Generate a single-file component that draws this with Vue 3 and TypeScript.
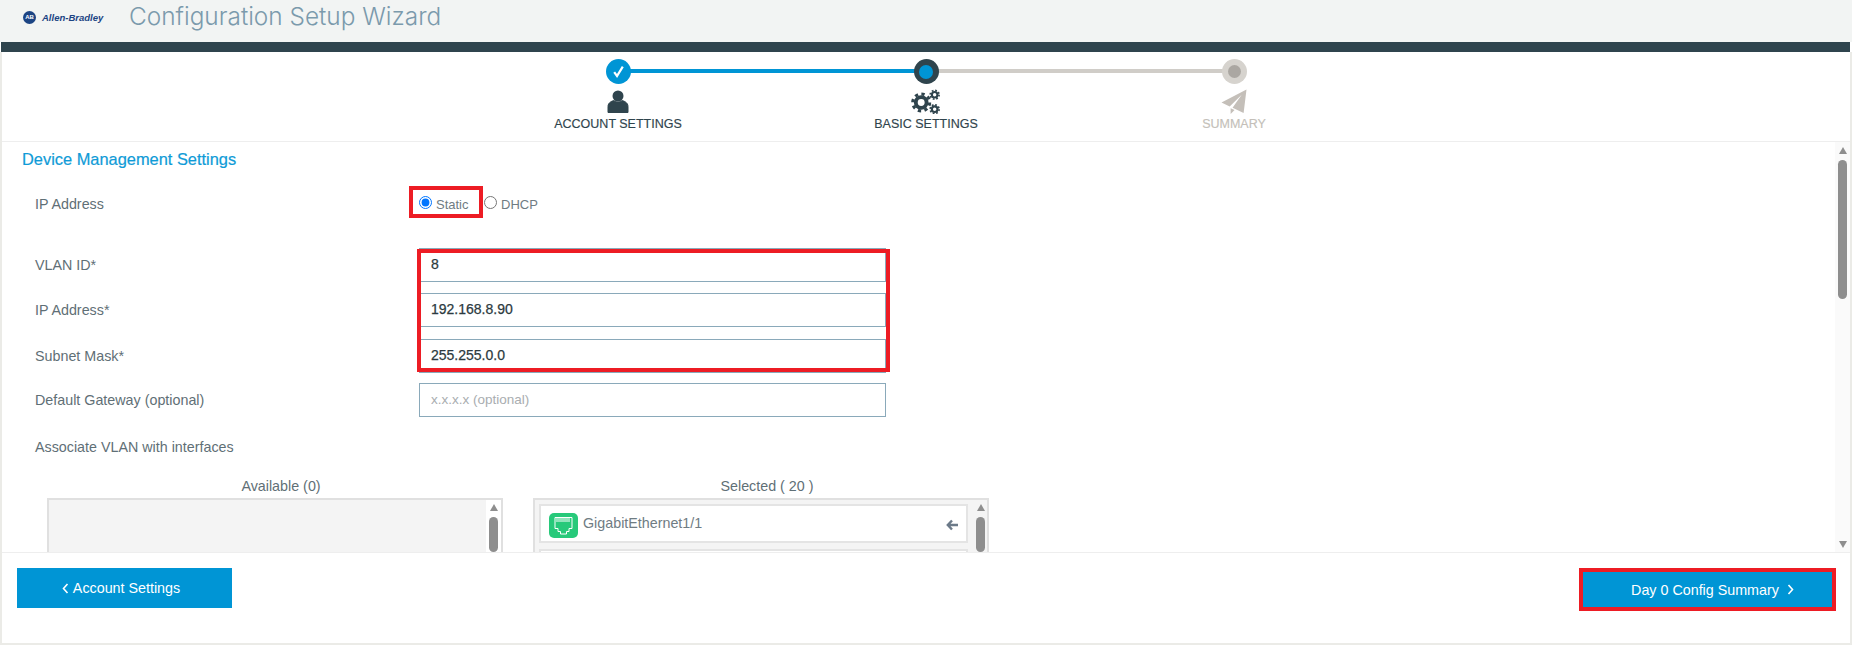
<script setup lang="ts">
interface Field { label: string; value: string; placeholder?: string }
const fields: Field[] = [
  { label: 'VLAN ID*', value: '8' },
  { label: 'IP Address*', value: '192.168.8.90' },
  { label: 'Subnet Mask*', value: '255.255.0.0' },
]
</script>

<template>
  <div class="frame">
    <header class="brand">
      <div class="logo">
        <span class="logo-badge">AB</span>
        <span class="logo-name">Allen-Bradley</span>
      </div>
      <h1 class="wizard-title">Configuration Setup Wizard</h1>
    </header>
    <div class="band"></div>

    <div class="body">
      <nav class="stepper">
        <div class="step step-done">
          <span class="dot">
            <svg width="13" height="13" viewBox="0 0 13 13"><path d="M2.2 7.2 L5 11 L10.8 1.6" fill="none" stroke="#fff" stroke-width="2.2" /></svg>
          </span>
          <svg class="step-icon" width="22" height="24" viewBox="0 0 22 24">
            <circle cx="11" cy="6.5" r="5.5" fill="#2f444d" />
            <path d="M1 23 V17 C1 13 5 11.5 7 11 C9 13 13 13 15 11 C17 11.5 21 13 21 17 V23 Z" fill="#2f444d" stroke="#2f444d" stroke-linejoin="round" />
          </svg>
          <span class="step-label">ACCOUNT SETTINGS</span>
        </div>
        <div class="step step-current">
          <span class="dot"><i></i></span>
          <svg class="step-icon" width="30" height="26" viewBox="0 0 30 26">
            <g fill="none" stroke="#2f444d">
              <circle cx="10" cy="14" r="5.6" stroke-width="4" />
              <circle cx="10" cy="14" r="8.8" stroke-width="3.2" stroke-dasharray="3.4 3.5" />
              <circle cx="24" cy="6" r="2.9" stroke-width="2.2" />
              <circle cx="24" cy="6" r="4.6" stroke-width="1.8" stroke-dasharray="1.8 1.81" />
              <circle cx="24" cy="21" r="2.9" stroke-width="2.2" />
              <circle cx="24" cy="21" r="4.6" stroke-width="1.8" stroke-dasharray="1.8 1.81" />
            </g>
          </svg>
          <span class="step-label">BASIC SETTINGS</span>
        </div>
        <div class="step step-next">
          <span class="dot"><i></i></span>
          <svg class="step-icon" width="28" height="26" viewBox="0 0 28 26">
            <path d="M27 0.5 L1 14 L9.5 18.2 L22 6 L12.5 19.6 L24 25 Z M10.5 20 L10.5 26 L14.6 21.8 Z" fill="#c4bfb9" />
          </svg>
          <span class="step-label">SUMMARY</span>
        </div>
      </nav>

      <main class="content">
        <h2 class="section-title">Device Management Settings</h2>

        <div class="row row-mode">
          <span class="field-label">IP Address</span>
          <div class="mode">
            <label class="choice choice-marked"><input type="radio" name="mode" checked />Static</label>
            <label class="choice"><input type="radio" name="mode" />DHCP</label>
          </div>
        </div>

        <div class="marked-group">
          <div v-for="f in fields" :key="f.label" class="row">
            <span class="field-label">{{ f.label }}</span>
            <input class="text-input" type="text" :value="f.value" readonly />
          </div>
        </div>

        <div class="row">
          <span class="field-label">Default Gateway (optional)</span>
          <input class="text-input" type="text" placeholder="x.x.x.x (optional)" readonly />
        </div>

        <div class="row row-assoc">
          <span class="field-label">Associate VLAN with interfaces</span>
        </div>

        <div class="lists">
          <section class="list-col">
            <div class="list-title">Available (0)</div>
            <div class="list-box list-empty">
              <div class="mini-scroll">
                <span class="arrow-up"></span>
                <span class="mini-thumb"></span>
              </div>
            </div>
          </section>
          <section class="list-col">
            <div class="list-title">Selected ( 20 )</div>
            <div class="list-box">
              <div class="list-items">
                <div class="item">
                  <span class="port">
                    <svg width="29" height="25" viewBox="0 0 29 25">
                      <path d="M6 4.5 H23 V15.5 H20 V18.5 H17.5 V21 H11.5 V18.5 H9 V15.5 H6 Z" fill="none" stroke="#fff" stroke-width="1" />
                      <path d="M8 5 V9 M10 5 V9 M12 5 V9 M14 5 V9 M16 5 V9 M18 5 V9 M20 5 V9" stroke="#fff" stroke-width="1" />
                    </svg>
                  </span>
                  <span class="item-name">GigabitEthernet1/1</span>
                  <svg class="item-arrow" width="12" height="12" viewBox="0 0 12 12">
                    <path d="M6 1.5 L1.8 6 L6 10.5 M2 6 H12" fill="none" stroke="#6c7a89" stroke-width="2.4" />
                  </svg>
                </div>
                <div class="item"></div>
              </div>
              <div class="mini-scroll mini-scroll-flat">
                <span class="arrow-up"></span>
                <span class="mini-thumb"></span>
              </div>
            </div>
          </section>
        </div>

        <div class="main-scroll">
          <span class="arrow-up"></span>
          <span class="main-thumb"></span>
          <span class="arrow-down"></span>
        </div>
      </main>

      <footer class="actions">
        <button class="btn btn-back" type="button">
          <svg width="7" height="11" viewBox="0 0 7 11"><path d="M5.5 1 L1.5 5.5 L5.5 10" fill="none" stroke="#fff" stroke-width="1.6" /></svg>
          Account Settings
        </button>
        <button class="btn btn-next" type="button">
          Day 0 Config Summary
          <svg width="7" height="11" viewBox="0 0 7 11"><path d="M1.5 1 L5.5 5.5 L1.5 10" fill="none" stroke="#fff" stroke-width="1.6" /></svg>
        </button>
      </footer>
    </div>
  </div>
</template>

<style scoped>
.frame {
  width: 1852px;
  height: 645px;
  display: flex;
  flex-direction: column;
  font-family: "Liberation Sans", Arial, sans-serif;
  color: #5f6f76;
  background: #fff;
  overflow: hidden;
}
.brand {
  height: 42px;
  flex: none;
  background: #f2f4f3;
  display: flex;
  align-items: flex-start;
}
.logo {
  display: flex;
  align-items: center;
  gap: 6px;
  margin: 11px 0 0 23px;
  width: 106px;
}
.logo-badge {
  width: 13px;
  height: 13px;
  border-radius: 50%;
  background: #1c4483;
  color: #fff;
  font-size: 6px;
  font-weight: 700;
  line-height: 13px;
  text-align: center;
  flex: none;
}
.logo-name {
  font-size: 9.5px;
  font-weight: 700;
  font-style: italic;
  color: #1c4483;
  white-space: nowrap;
}
.wizard-title {
  margin: 0;
  font-family: Inter, "Liberation Sans", sans-serif;
  font-size: 24.4px;
  line-height: 32px;
  font-weight: 300;
  color: #7b9aac;
  white-space: nowrap;
}
.band {
  height: 10px;
  flex: none;
  margin: 0 2px 0 1px;
  background: #2f444d;
}
.body {
  flex: 1;
  min-height: 0;
  display: flex;
  flex-direction: column;
  border-left: 2px solid #ebebe7;
  border-right: 2px solid #ebebe7;
  border-bottom: 2px solid #ebebe7;
}
.stepper {
  height: 90px;
  flex: none;
  box-sizing: border-box;
  padding: 7px 0 0 0;
  display: flex;
  justify-content: center;
  border-bottom: 1px solid #eeeeee;
}
.step {
  position: relative;
  width: 308px;
  display: flex;
  flex-direction: column;
  align-items: center;
}
.step-done::after,
.step-current::after {
  content: "";
  position: absolute;
  left: 50%;
  top: 10px;
  width: 308px;
  height: 4px;
  background: #d0cdc8;
}
.step-done::after { background: #0095d5; }
.dot {
  position: relative;
  z-index: 1;
  width: 25px;
  height: 25px;
  border-radius: 50%;
  display: flex;
  align-items: center;
  justify-content: center;
}
.step-done .dot { background: #0095d5; }
.step-current .dot { background: #2f444d; }
.step-current .dot i { width: 14px; height: 14px; border-radius: 50%; background: #0095d5; }
.step-next .dot { background: #d6d3ce; }
.step-next .dot i { width: 13px; height: 13px; border-radius: 50%; background: #aba7a2; }
.step-icon { margin-top: 5px; display: block; height: 25px; }
.step-label {
  margin-top: 2px;
  font-size: 12.5px;
  line-height: 16px;
  color: #2f444d;
  -webkit-text-stroke: 0.15px currentColor;
  white-space: nowrap;
}
.step-next .step-label { color: #c4bfb9; }

.content {
  position: relative;
  flex: 1;
  min-height: 0;
  overflow: hidden;
  padding-left: 20px;
}
.section-title {
  margin: 0;
  height: 34px;
  font-size: 16.4px;
  line-height: 35px;
  font-weight: 400;
  color: #0f9bd7;
  -webkit-text-stroke: 0.2px #0f9bd7;
}
.row {
  display: flex;
  align-items: center;
  height: 34px;
  margin-bottom: 11.33px;
  padding-left: 13px;
}
.row-mode { height: 36px; margin: 10px 0 26px; }
.row-assoc { margin: 12.67px 0 10px; }
.field-label {
  width: 384px;
  flex: none;
  font-size: 14.3px;
  color: #5f6f76;
}
.mode { display: flex; align-items: center; }
.choice {
  display: flex;
  align-items: center;
  font-size: 13px;
  color: #6f7c83;
  width: 65px;
  gap: 4px;
  position: relative;
}
.choice + .choice { width: auto; }
.choice input { margin: -3px 0 0 0; width: 13px; height: 13px; }
.choice-marked::after {
  content: "";
  position: absolute;
  left: -10px;
  top: -11px;
  width: 74px;
  height: 32px;
  box-sizing: border-box;
  border: 4px solid #ed1c24;
  pointer-events: none;
}
.marked-group { position: relative; height: 124px; margin-bottom: 11.33px; }
.marked-group .row:last-child { margin-bottom: 0; }
.marked-group::after {
  content: "";
  position: absolute;
  left: 395px;
  top: 1px;
  width: 473px;
  height: 123px;
  box-sizing: border-box;
  border: 4px solid #ed1c24;
  pointer-events: none;
}
.text-input {
  width: 467px;
  height: 34px;
  box-sizing: border-box;
  border: 1px solid #8aa9ba;
  outline: none;
  padding: 0 11px 2px;
  font-family: "Liberation Sans", sans-serif;
  font-size: 14px;
  color: #2c3a40;
  -webkit-text-stroke: 0.25px #2c3a40;
  background: #fff;
}
.text-input::placeholder {
  font-size: 13.5px;
  color: #a9adb0;
  -webkit-text-stroke: 0;
  opacity: 1;
}
.lists { display: flex; gap: 30px; padding-left: 25px; }
.list-col { width: 456px; }
.list-title {
  height: 24px;
  line-height: 24px;
  text-align: center;
  padding-left: 12px;
  font-size: 14.3px;
  color: #5f6f76;
}
.list-box {
  display: flex;
  height: 120px;
  box-sizing: border-box;
  border: 2px solid #e0e0e0;
  background: #f4f4f4;
  position: relative;
}
.list-items { flex: 1; padding: 4px 6px 0 4px; min-width: 0; }
.list-empty { justify-content: flex-end; }
.item {
  height: 39px;
  box-sizing: border-box;
  border: 2px solid #e4e4e4;
  background: #fff;
  margin-bottom: 6px;
  display: flex;
  align-items: center;
  padding-left: 8px;
}
.port {
  width: 29px;
  height: 25px;
  margin-top: 4px;
  border-radius: 5px;
  background: #27c97a;
  flex: none;
  display: block;
}
.port svg { display: block; }
.item-name { margin: -1px 0 0 5px; font-size: 14.3px; color: #6f7c83; flex: 1; }
.item-arrow { margin: 3px 8px 0 0; flex: none; }
.mini-scroll {
  width: 15px;
  flex: none;
  background: #fff;
  display: flex;
  flex-direction: column;
  align-items: center;
  padding-top: 4px;
  box-sizing: border-box;
}
.mini-scroll-flat { background: transparent; width: 13px; }
.arrow-up, .arrow-down {
  width: 0;
  height: 0;
  border-left: 4.5px solid transparent;
  border-right: 4.5px solid transparent;
}
.arrow-up { border-bottom: 7px solid #8e8e8e; }
.arrow-down { border-top: 7px solid #8e8e8e; }
.mini-thumb {
  width: 9px;
  height: 35px;
  margin-top: 6px;
  background: #8e8e8e;
  border-radius: 4.5px;
  flex: none;
}
.main-scroll {
  position: absolute;
  right: 0;
  top: 0;
  bottom: 0;
  width: 15px;
  background: #fafafa;
  display: flex;
  flex-direction: column;
  align-items: center;
  padding: 5px 0 4px;
  box-sizing: border-box;
}
.main-thumb {
  width: 9px;
  height: 139px;
  margin-top: 6px;
  background: #8e8e8e;
  border-radius: 4.5px;
}
.main-scroll .arrow-down { margin-top: auto; }
.actions {
  flex: none;
  height: 91px;
  box-sizing: border-box;
  border-top: 1px solid #eeeeee;
  display: flex;
  justify-content: space-between;
  align-items: flex-start;
  padding: 15px 14px 0 15px;
}
.btn {
  background: #0095d5;
  border: none;
  color: #fff;
  font-family: "Liberation Sans", sans-serif;
  font-size: 14.3px;
  display: flex;
  align-items: center;
  justify-content: center;
  gap: 4px;
  padding: 0;
}
.btn-back { width: 215px; height: 40px; padding-right: 7px; }
.btn-next {
  width: 257px;
  height: 43px;
  box-sizing: border-box;
  border: 4px solid #ed1c24;
  padding-left: 10px;
  gap: 8px;
}
</style>

<style>
html, body { margin: 0; background: #fff; }
</style>
